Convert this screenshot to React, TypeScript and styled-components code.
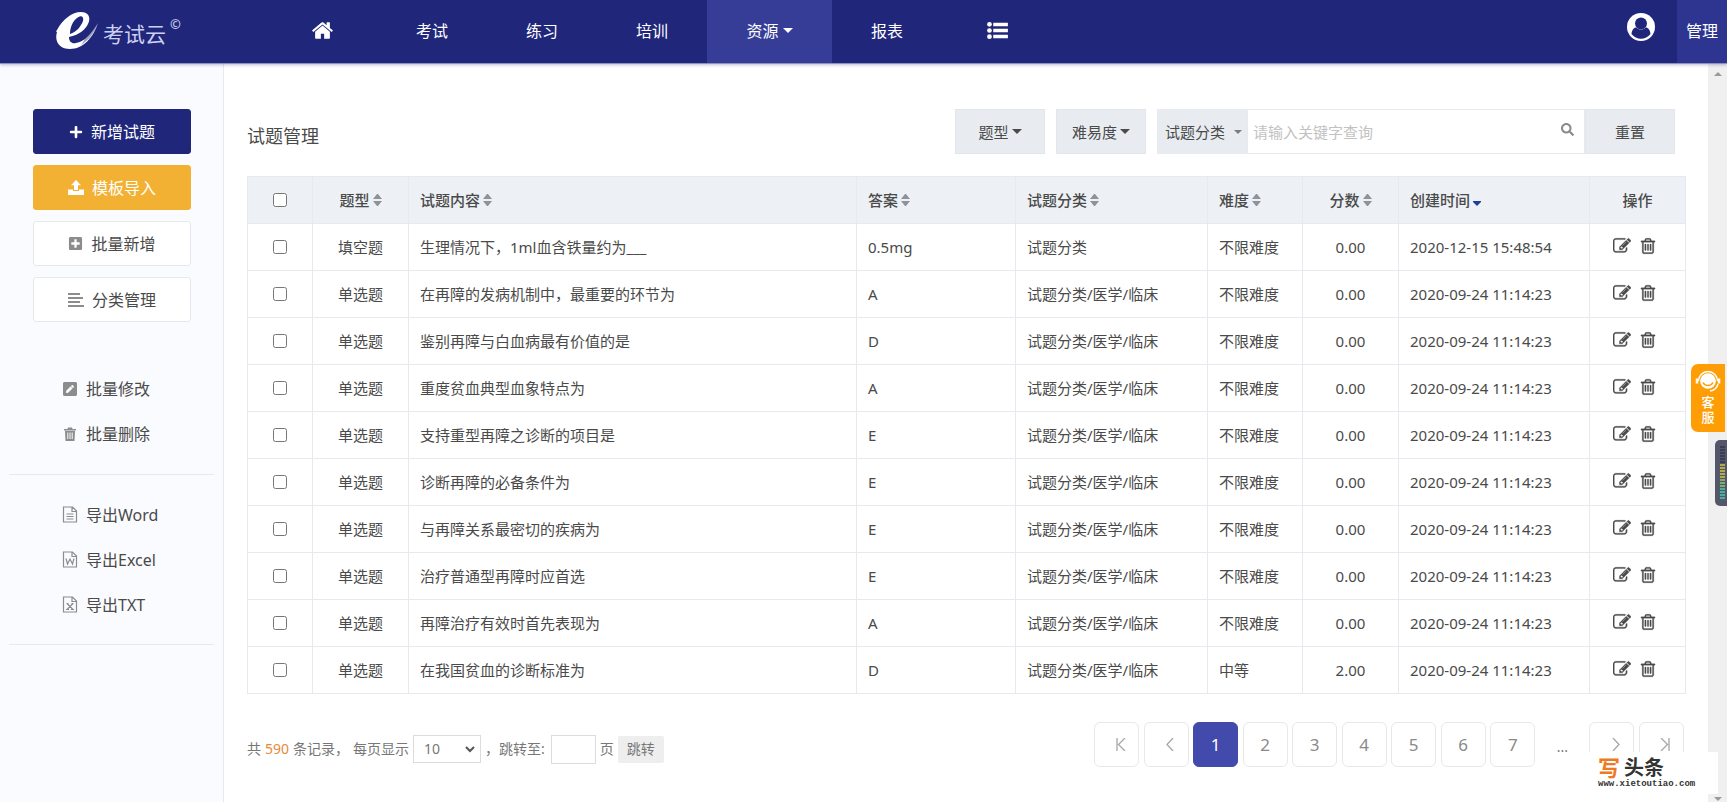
import React from "react";
import styled, { createGlobalStyle, css } from "styled-components";
import { FaPlus, FaPlusSquare, FaPenSquare, FaSearch } from "react-icons/fa";

const color = {
  navy: "#20277b",
  navyActive: "#363d97",
  navyAdmin: "#2d3591",
  amber: "#f3b133",
  text: "#4a4a4a",
  muted: "#777777",
  line: "#e6e9ed",
  head: "#edf1f5",
  filter: "#e8ecf1",
  side: "#fafbfe",
};

const Global = createGlobalStyle`
  * { box-sizing: border-box; }
  body {
    margin: 0;
    background: #fff;
    color: ${color.text};
    font-family: "Noto Sans", "Noto Sans CJK SC", sans-serif;
    font-size: 15px;
    line-height: 22px;
  }
  button, input, select { font: inherit; color: inherit; }
  a { color: inherit; text-decoration: none; }
`;

/* ---------- page frame ---------- */

const Page = styled.div`
  display: flex;
  flex-direction: column;
  min-height: 100vh;
`;

const Header = styled.header`
  display: flex;
  height: 64px;
  background: ${color.navy};
  color: #fff;
  border-bottom: 1px solid #8d92c0;
  box-shadow: 0 1px 3px rgba(32, 39, 123, 0.3);
  z-index: 1;
`;

const Brand = styled.a`
  display: flex;
  align-items: flex-start;
  width: 267px;
  padding: 12px 0 0 55px;
`;

const BrandName = styled.span`
  margin: 6px 4px 0 2px;
  font-size: 21px;
  line-height: 32px;
  color: #ccd0f2;
`;

const BrandMark = styled.span`
  margin-top: 2px;
  font-size: 13px;
  font-weight: 600;
  line-height: 20px;
  color: #ccd0f2;
`;

const Nav = styled.nav`
  display: flex;
  flex: 1;
`;

const NavLink = styled.a<{ $active?: boolean }>`
  display: flex;
  align-items: center;
  justify-content: center;
  gap: 4px;
  width: ${(p) => (p.$active ? 125 : 110)}px;
  padding-bottom: 2px;
  font-size: 16px;
  background: ${(p) => (p.$active ? color.navyActive : "transparent")};
`;

const Account = styled.a`
  display: flex;
  align-items: center;
  padding: 0 22px 9px;
`;

const AdminLink = styled.a`
  display: flex;
  align-items: center;
  justify-content: center;
  width: 50px;
  padding-bottom: 2px;
  font-size: 16px;
  background: ${color.navyAdmin};
`;

const Body = styled.div`
  display: flex;
  flex: 1;
`;

/* ---------- sidebar ---------- */

const Sidebar = styled.aside`
  width: 224px;
  padding: 45px 9px 0;
  background: ${color.side};
  border-right: 1px solid ${color.line};
`;

const Actions = styled.div`
  display: flex;
  flex-direction: column;
  gap: 11px;
  padding: 0 23px 0 24px;
`;

const tones = {
  primary: css`
    background: ${color.navy};
    border-color: ${color.navy};
    color: #fff;
  `,
  warning: css`
    background: ${color.amber};
    border-color: ${color.amber};
    color: #fff;
  `,
  plain: css`
    background: #fff;
    border-color: ${color.line};
    svg { color: #8c8c8c; }
  `,
};

const ActionButton = styled.button<{ $tone: keyof typeof tones }>`
  display: flex;
  align-items: center;
  justify-content: center;
  gap: 8px;
  height: 45px;
  padding: 0;
  border: 1px solid;
  border-radius: 3px;
  font-size: 16px;
  ${(p) => tones[p.$tone]}
`;

const LinkGroup = styled.ul<{ $first?: boolean }>`
  list-style: none;
  margin: 0;
  padding: ${(p) => (p.$first ? "44px 0 18px" : "17px 0 17px")} 53px;
  border-bottom: 1px solid ${color.line};
`;

const SideLink = styled.a`
  display: flex;
  align-items: center;
  gap: 8px;
  height: 45px;
  font-size: 16px;
  white-space: nowrap;
  svg { width: 16px; flex: none; color: #8c8c8c; }
`;

/* ---------- main column ---------- */

const Main = styled.main`
  flex: 1;
  min-width: 0;
  padding: 45px 22px 0 23px;
`;

const Toolbar = styled.div`
  display: flex;
  align-items: center;
  gap: 11px;
  padding-right: 11px;
`;

const Title = styled.h1`
  flex: 1;
  margin: 0;
  padding-top: 8px;
  font-size: 18px;
  font-weight: 400;
`;

const FilterButton = styled.button`
  display: flex;
  align-items: center;
  justify-content: center;
  gap: 3px;
  width: 90px;
  height: 45px;
  padding: 0;
  border: 1px solid #e2e6eb;
  background: ${color.filter};
`;

const SearchGroup = styled.form`
  display: flex;
  width: 518px;
  height: 45px;
`;

const CategoryField = styled.label`
  display: flex;
  align-items: center;
  width: 90px;
  padding: 0 5px 0 8px;
  background: ${color.filter};
  color: #7d7d7d;
`;

const CategorySelect = styled.select`
  flex: 1;
  min-width: 0;
  padding: 0;
  border: 0;
  appearance: none;
  background: transparent;
  color: ${color.text};
`;

const SearchField = styled.div`
  display: flex;
  flex: 1;
  align-items: center;
  padding: 0 10px 0 5px;
  border: 1px solid ${color.line};
`;

const SearchInput = styled.input`
  flex: 1;
  min-width: 0;
  padding: 0;
  border: 0;
  outline: 0;
  background: transparent;
  &::placeholder { color: #c2c2c2; }
`;

const IconButton = styled.button`
  display: inline-flex;
  padding: 0;
  border: 0;
  background: transparent;
`;

const SearchButton = styled(IconButton)`
  padding-bottom: 4px;
  color: #8a8a8a;
`;

/* ---------- table ---------- */

const Table = styled.table`
  width: 100%;
  margin-top: 22px;
  table-layout: fixed;
  border-collapse: collapse;
`;

const cell = css<{ $center?: boolean }>`
  padding: 0 11px;
  border: 1px solid ${color.line};
  text-align: ${(p) => (p.$center ? "center" : "left")};
  white-space: nowrap;
  overflow: hidden;
`;

const Th = styled.th<{ $center?: boolean }>`
  ${cell}
  height: 47px;
  background: ${color.head};
  font-weight: 500;
`;

const Td = styled.td<{ $center?: boolean }>`
  ${cell}
  height: 47px;
`;

const SortButton = styled.button`
  display: inline-flex;
  align-items: center;
  gap: 3px;
  padding: 0;
  border: 0;
  background: transparent;
  font-weight: 500;
`;

const Check = styled.input`
  display: block;
  width: 14px;
  height: 14px;
  margin: 0 auto;
`;

const RowActions = styled.div`
  display: flex;
  justify-content: center;
  gap: 8px;
  padding: 0 5px 2px 0;
`;

/* ---------- footer ---------- */

const Footer = styled.footer`
  display: flex;
  align-items: center;
  justify-content: space-between;
  margin-top: 28px;
  font-size: 14px;
  color: ${color.muted};
`;

const Summary = styled.form`
  display: flex;
  align-items: center;
  gap: 4px;
  padding-top: 4px;
`;

const Count = styled.span`
  color: #e8893a;
`;

const Clause = styled.span`
  display: inline-flex;
  gap: 4px;
`;

const JumpLabel = styled.span`
  display: inline-flex;
  margin-right: 2px;
`;

const SizeField = styled.span`
  display: grid;
  align-items: center;
  width: 68px;
  height: 28px;
  border: 1px solid #dcdcdc;
  svg { grid-area: 1 / 1; justify-self: end; margin-right: 5px; pointer-events: none; }
`;

const SizeSelect = styled.select`
  grid-area: 1 / 1;
  width: 100%;
  height: 100%;
  padding: 0 0 0 10px;
  border: 0;
  appearance: none;
  background: transparent;
`;

const JumpInput = styled.input`
  width: 45px;
  height: 29px;
  border: 1px solid #dcdcdc;
  background: #fff;
`;

const JumpButton = styled.button`
  width: 46px;
  height: 27px;
  padding: 0;
  border: 0;
  border-radius: 2px;
  background: #eeeeee;
`;

const Pager = styled.nav`
  display: flex;
  justify-content: space-between;
  width: 590px;
  margin-right: 2px;
`;

const PageButton = styled.button<{ $current?: boolean; $edge?: boolean }>`
  display: flex;
  align-items: center;
  justify-content: center;
  width: 45px;
  height: 45px;
  padding: 0 0 0 ${(p) => (p.$edge ? 8 : 0)}px;
  border: 1px solid ${(p) => (p.$current ? "#424aac" : "#e8e8e8")};
  border-radius: 6px;
  background: ${(p) => (p.$current ? "#424aac" : "#fff")};
  color: ${(p) => (p.$current ? "#fff" : "#8a8a8a")};
  font-size: 17px;
`;

const Ellipsis = styled.span`
  width: 45px;
  text-align: center;
  line-height: 50px;
`;

/* ---------- right edge ---------- */

const Track = styled.div`
  display: flex;
  flex-direction: column;
  justify-content: space-between;
  align-items: center;
  width: 19px;
  padding: 8px 0 1px;
  background: #f0f0f0;
  color: #9a9a9a;
`;

const ServiceTab = styled.button`
  position: fixed;
  right: 2px;
  top: 364px;
  display: flex;
  flex-direction: column;
  align-items: center;
  width: 34px;
  padding: 5px 0 7px;
  border: 0;
  border-radius: 7px 0 0 7px;
  background: #ff9d05;
  color: #fff;
  font-size: 13px;
  font-weight: 500;
  line-height: 15px;
  svg { margin-bottom: 2px; }
`;

const Meter = styled.div`
  position: fixed;
  right: 0;
  top: 440px;
  width: 12px;
  height: 66px;
  padding: 6px 2px 6px 5px;
  border-radius: 5px 0 0 5px;
  background: #54576c;
`;

const Watermark = styled.a`
  position: fixed;
  right: 9px;
  bottom: 8px;
  width: 129px;
  height: 42px;
  padding: 4px 9px 0;
  background: #fff;
  color: #333;
`;

const WatermarkName = styled.span`
  display: flex;
  align-items: center;
  gap: 4px;
  font-size: 20px;
  font-weight: 700;
  line-height: 23px;
`;

const WatermarkFirst = styled.span`
  color: #ee7a22;
  font-size: 22px;
`;

const WatermarkUrl = styled.span`
  display: block;
  font-family: "Liberation Mono", monospace;
  font-size: 9px;
  font-weight: 700;
  line-height: 10px;
`;

/* ---------- drawings ---------- */

const HOME =
  "M1472 992v480q0 26-19 45t-45 19h-384v-384h-256v384h-384q-26 0-45-19t-19-45v-480q0-1 .5-3t.5-3l575-474 575 474q1 2 1 6zm223-69l-62 74q-8 9-21 11h-3q-13 0-21-7l-692-577-692 577q-12 8-24 7-13-2-21-11l-62-74q-8-10-7-23.5t11-21.5l719-599q32-26 76-26t76 26l244 204v-195q0-14 9-23t23-9h192q14 0 23 9t9 23v408l219 182q10 8 11 21.5t-7 23.5z";
const TRASH =
  "M704 736v576q0 14-9 23t-23 9h-64q-14 0-23-9t-9-23v-576q0-14 9-23t23-9h64q14 0 23 9t9 23zm256 0v576q0 14-9 23t-23 9h-64q-14 0-23-9t-9-23v-576q0-14 9-23t23-9h64q14 0 23 9t9 23zm256 0v576q0 14-9 23t-23 9h-64q-14 0-23-9t-9-23v-576q0-14 9-23t23-9h64q14 0 23 9t9 23zm128 724v-948h-896v948q0 22 7 40.5t14.5 27 10.5 8.5h832q3 0 10.5-8.5t14.5-27 7-40.5zm-672-1076h448l-48-117q-7-9-17-11h-317q-10 2-17 11zm928 32v64q0 14-9 23t-23 9h-96v948q0 83-47 143.5t-113 60.5h-832q-66 0-113-58.5t-47-141.5v-952h-96q-14 0-23-9t-9-23v-64q0-14 9-23t23-9h309l70-167q15-37 54-63t79-26h320q40 0 79 26t54 63l70 167h309q14 0 23 9t9 23z";
const EDIT =
  "M888 1184l116-116-152-152-116 116v56h96v96h56zm440-720q-16-16-33 1l-350 350q-17 17-1 33t33-1l350-350q17-17 1-33zm80 594v190q0 119-84.5 203.5t-203.5 84.5h-832q-119 0-203.5-84.5t-84.5-203.5v-832q0-119 84.5-203.5t203.5-84.5h832q63 0 117 25 15 7 18 23 3 17-9 29l-49 49q-14 14-32 8-23-6-45-6h-832q-66 0-113 47t-47 113v832q0 66 47 113t113 47h832q66 0 113-47t47-113v-126q0-13 9-22l64-64q15-15 35-7t20 29zm-96-738l288 288-672 672h-288v-288zm444 132l-92 92-288-288 92-92q28-28 68-28t68 28l152 152q28 28 28 68t-28 68z";

const Glyph = ({ d, size, bold }: { d: string; size: number; bold?: boolean }) => (
  <svg
    width={size}
    height={size}
    viewBox="0 0 1792 1792"
    fill="currentColor"
    stroke="currentColor"
    strokeWidth={bold ? 30 : 0}
    aria-hidden="true"
  >
    <path d={d} />
  </svg>
);

const LogoMark = () => (
  <svg width="46" height="38" viewBox="0 0 46 38" fill="none" aria-hidden="true">
    <path
      fill="#fff"
      fillRule="evenodd"
      d="M2 18C8 7 17 0 26 0c8 0 10 6 7 12C30 18 24 23 14 25c0 5 3 7 7 6 8-1 15-9 22-20C38 26 28 37 15 37 5 37-1 30 2 20c-1 0-1-1 0-2zM15 22c7-2 11-8 13-13 1-5-2-6-6-3-4 3-7 9-7 16z"
    />
    <path fill={color.navy} opacity="0.45" d="M44 10C39 21 34 28 26 33c3-4 4-6 5-9 5-4 8-8 12-14z" />
  </svg>
);

const Caret = ({ w = 10, up = false }: { w?: number; up?: boolean }) => (
  <svg width={w} height={w / 2} viewBox="0 0 8 4" fill="currentColor" aria-hidden="true">
    <path d={up ? "M0 4h8L4 0z" : "M0 0h8L4 4z"} />
  </svg>
);

const SortMark = ({ desc }: { desc?: boolean }) =>
  desc ? (
    <svg width="8" height="14" viewBox="0 0 8 14" aria-hidden="true">
      <path d="M0 8h8v1L4 13 0 9z" fill="#1f3f9e" />
    </svg>
  ) : (
    <svg width="9" height="12" viewBox="0 0 9 12" aria-hidden="true">
      <path d="M0 5h9L5 0H4zM0 7h9l-4 5H4z" fill="#8f9399" />
    </svg>
  );

const ListIcon = () => (
  <svg width="21" height="17" viewBox="0 0 22 18" fill="#fff" aria-hidden="true">
    <circle cx="2.5" cy="2.5" r="2.5" />
    <circle cx="2.5" cy="9" r="2.5" />
    <circle cx="2.5" cy="15.5" r="2.5" />
    <path d="M6.500 .700h15.500v3.800H6.500zM6.500 7.100h15.500v3.800H6.500zM6.500 13.500h15.500v3.800H6.500z" />
  </svg>
);

const UserIcon = () => (
  <svg width="28" height="28" viewBox="0 0 28 28" aria-hidden="true">
    <circle cx="14" cy="14" r="14" fill="#fff" />
    <circle cx="14" cy="10.500" r="6" fill={color.navy} />
    <path d="M4.500 21c.4-4 2.200-6.500 4.800-6.500 2.800 2.800 6.600 2.800 9.400 0 2.600 0 4.400 2.500 4.800 6.500-4.800 6.300-14.200 6.300-19 0z" fill={color.navy} />
  </svg>
);

const UploadIcon = () => (
  <svg width="16" height="15" viewBox="0 0 16 15" fill="currentColor" aria-hidden="true">
    <path d="M8 0l5 5.200h-3V10H6V5.200H3zM0 9.500h5V11h6V9.500h5V15H0z" />
  </svg>
);

const LinesIcon = () => (
  <svg width="16" height="14" viewBox="0 0 16 14" fill="currentColor" aria-hidden="true">
    <path d="M0 0h12v2H0zM0 4h15v2H0zM0 8h12v2H0zM0 12h16v2H0z" />
  </svg>
);

const BinIcon = () => (
  <svg width="14" height="14" viewBox="0 0 14 14" aria-hidden="true">
    <path fill="currentColor" d="M1 2h3.500l.5-1.500h4L9.500 2H13v1.500H1zM2 4h10l-.5 10h-9z" />
    <path stroke={color.side} d="M4.800 5.500v6.500M7 5.500v6.500M9.200 5.500v6.500" />
  </svg>
);

const fileMarks = {
  text: "M4 8h7M4 10.500h7M4 13h7",
  word: "M3.500 7.500l1.500 5.500 2.500-5 2.500 5 1.500-5.500",
  sheet: "M4.500 7.500l6 6M10.500 7.500l-6 6M3.500 13.500h3M8.500 13.500h3M4 7.500h2M9 7.500h2",
};

const FileIcon = ({ kind }: { kind: keyof typeof fileMarks }) => (
  <svg width="15" height="17" viewBox="0 0 15 17" fill="none" stroke="currentColor" strokeWidth="1.200" aria-hidden="true">
    <path d="M1 1h9l4 4v11H1zM9.500 1v4.500H14" />
    <path d={fileMarks[kind]} />
  </svg>
);

const Chevron = () => (
  <svg width="10" height="7" viewBox="0 0 10 7" fill="none" stroke="#555" strokeWidth="2" aria-hidden="true">
    <path d="M1 1l4 4 4-4" />
  </svg>
);

const arrows = {
  first: "M1 0v13M9 0L2.500 6.500 9 13",
  prev: "M8 0L2 6.500 8 13",
  next: "M2 0l6 6.500L2 13",
  last: "M9 0v13M1 0l6.500 6.500L1 13",
};

const Arrow = ({ kind }: { kind: keyof typeof arrows }) => (
  <svg width="10" height="13" viewBox="0 0 10 13" fill="none" stroke="#a6a6a6" strokeWidth="1.300" aria-hidden="true">
    <path d={arrows[kind]} />
  </svg>
);

const AgentIcon = () => (
  <svg width="26" height="24" viewBox="0 0 26 24" fill="none" aria-hidden="true">
    <path d="M3.500 12a9.500 9.500 0 0 1 19 0" stroke="#fff" strokeWidth="1.500" />
    <circle cx="13" cy="12" r="7.800" fill="#fff" />
    <path d="M8 13.500c2 4 8 4 10 0" stroke="#ff9d05" strokeWidth="1.500" />
    <path d="M2 9.500v5M24 9.500v5" stroke="#fff" strokeWidth="2.500" />
    <path d="M23 15c-1 4-4 6.500-8 7" stroke="#fff" strokeWidth="1.500" />
  </svg>
);

const LevelBars = () => (
  <svg width="5" height="54" viewBox="0 0 5 54" aria-hidden="true">
    {Array.from({ length: 18 }, (_, i) => (
      <rect key={i} y={i * 3} width="5" height="2" fill={i < 6 ? "#3c3f52" : i < 11 ? "#b5a94a" : i < 14 ? "#7fae68" : "#45b39a"} />
    ))}
  </svg>
);

/* ---------- data ---------- */

const D = "2020-09-24 11:14:23";
const C = "试题分类/医学/临床";
const rows = [
  ["填空题", "生理情况下，1ml血含铁量约为___", "0.5mg", "试题分类", "不限难度", "0.00", "2020-12-15 15:48:54"],
  ["单选题", "在再障的发病机制中，最重要的环节为", "A", C, "不限难度", "0.00", D],
  ["单选题", "鉴别再障与白血病最有价值的是", "D", C, "不限难度", "0.00", D],
  ["单选题", "重度贫血典型血象特点为", "A", C, "不限难度", "0.00", D],
  ["单选题", "支持重型再障之诊断的项目是", "E", C, "不限难度", "0.00", D],
  ["单选题", "诊断再障的必备条件为", "E", C, "不限难度", "0.00", D],
  ["单选题", "与再障关系最密切的疾病为", "E", C, "不限难度", "0.00", D],
  ["单选题", "治疗普通型再障时应首选", "E", C, "不限难度", "0.00", D],
  ["单选题", "再障治疗有效时首先表现为", "A", C, "不限难度", "0.00", D],
  ["单选题", "在我国贫血的诊断标准为", "D", C, "中等", "2.00", D],
];

const columns: { label: string; width?: number; center?: boolean; desc?: boolean }[] = [
  { label: "题型", width: 96, center: true },
  { label: "试题内容" },
  { label: "答案", width: 159 },
  { label: "试题分类", width: 192 },
  { label: "难度", width: 95 },
  { label: "分数", width: 96, center: true },
  { label: "创建时间", width: 191, desc: true },
];

export default function App() {
  return (
    <Page>
      <Global />
      <Header>
        <Brand href="#">
          <LogoMark />
          <BrandName>考试云</BrandName>
          <BrandMark>©</BrandMark>
        </Brand>
        <Nav>
          <NavLink href="#" aria-label="首页"><Glyph d={HOME} size={23} /></NavLink>
          <NavLink href="#">考试</NavLink>
          <NavLink href="#">练习</NavLink>
          <NavLink href="#">培训</NavLink>
          <NavLink href="#" $active>资源<Caret /></NavLink>
          <NavLink href="#">报表</NavLink>
          <NavLink href="#" aria-label="更多"><ListIcon /></NavLink>
        </Nav>
        <Account href="#" aria-label="账户"><UserIcon /></Account>
        <AdminLink href="#">管理</AdminLink>
      </Header>

      <Body>
        <Sidebar>
          <Actions>
            <ActionButton $tone="primary"><FaPlus size={14} />新增试题</ActionButton>
            <ActionButton $tone="warning"><UploadIcon />模板导入</ActionButton>
            <ActionButton $tone="plain"><FaPlusSquare size={15} />批量新增</ActionButton>
            <ActionButton $tone="plain"><LinesIcon />分类管理</ActionButton>
          </Actions>
          <LinkGroup $first>
            <li><SideLink href="#"><FaPenSquare size={16} />批量修改</SideLink></li>
            <li><SideLink href="#"><BinIcon />批量删除</SideLink></li>
          </LinkGroup>
          <LinkGroup>
            <li><SideLink href="#"><FileIcon kind="text" />导出Word</SideLink></li>
            <li><SideLink href="#"><FileIcon kind="word" />导出Excel</SideLink></li>
            <li><SideLink href="#"><FileIcon kind="sheet" />导出TXT</SideLink></li>
          </LinkGroup>
        </Sidebar>

        <Main>
          <Toolbar>
            <Title>试题管理</Title>
            <FilterButton>题型<Caret /></FilterButton>
            <FilterButton>难易度<Caret /></FilterButton>
            <SearchGroup>
              <CategoryField>
                <CategorySelect aria-label="查询范围"><option>试题分类</option></CategorySelect>
                <Caret w={8} />
              </CategoryField>
              <SearchField>
                <SearchInput aria-label="关键字" placeholder="请输入关键字查询" />
                <SearchButton type="button" aria-label="查询"><FaSearch size={13} /></SearchButton>
              </SearchField>
              <FilterButton type="reset">重置</FilterButton>
            </SearchGroup>
          </Toolbar>

          <Table>
            <colgroup>
              <col width={65} />
              {columns.map((c) => <col key={c.label} width={c.width} />)}
              <col width={96} />
            </colgroup>
            <thead>
              <tr>
                <Th $center><Check type="checkbox" aria-label="全选" /></Th>
                {columns.map((c) => (
                  <Th key={c.label} $center={c.center}>
                    <SortButton>{c.label}<SortMark desc={c.desc} /></SortButton>
                  </Th>
                ))}
                <Th $center>操作</Th>
              </tr>
            </thead>
            <tbody>
              {rows.map((r) => (
                <tr key={r[1]}>
                  <Td $center><Check type="checkbox" aria-label={r[1]} /></Td>
                  {r.map((v, i) => <Td key={i} $center={columns[i].center}>{v}</Td>)}
                  <Td $center>
                    <RowActions>
                      <IconButton aria-label="编辑"><Glyph d={EDIT} size={18} bold /></IconButton>
                      <IconButton aria-label="删除"><Glyph d={TRASH} size={18} bold /></IconButton>
                    </RowActions>
                  </Td>
                </tr>
              ))}
            </tbody>
          </Table>

          <Footer>
            <Summary>
              <Clause>共 <Count>590</Count> 条记录，</Clause>
              <label htmlFor="page-size">每页显示</label>
              <SizeField>
                <SizeSelect id="page-size"><option>10</option></SizeSelect>
                <Chevron />
              </SizeField>
              <JumpLabel><span>，</span><label htmlFor="jump">跳转至:</label></JumpLabel>
              <JumpInput id="jump" />
              <span>页</span>
              <JumpButton type="button">跳转</JumpButton>
            </Summary>
            <Pager aria-label="分页">
              <PageButton $edge aria-label="首页"><Arrow kind="first" /></PageButton>
              <PageButton $edge aria-label="上一页"><Arrow kind="prev" /></PageButton>
              {[1, 2, 3, 4, 5, 6, 7].map((n) => <PageButton key={n} $current={n === 1}>{n}</PageButton>)}
              <Ellipsis>...</Ellipsis>
              <PageButton $edge aria-label="下一页"><Arrow kind="next" /></PageButton>
              <PageButton $edge aria-label="末页"><Arrow kind="last" /></PageButton>
            </Pager>
          </Footer>
        </Main>

        <Track aria-hidden="true">
          <Caret w={8} up />
          <Caret w={8} />
        </Track>
      </Body>

      <ServiceTab>
        <AgentIcon />
        <span>客</span>
        <span>服</span>
      </ServiceTab>
      <Meter><LevelBars /></Meter>
      <Watermark href="#">
        <WatermarkName><WatermarkFirst>写</WatermarkFirst>头条</WatermarkName>
        <WatermarkUrl>www.xietoutiao.com</WatermarkUrl>
      </Watermark>
    </Page>
  );
}
